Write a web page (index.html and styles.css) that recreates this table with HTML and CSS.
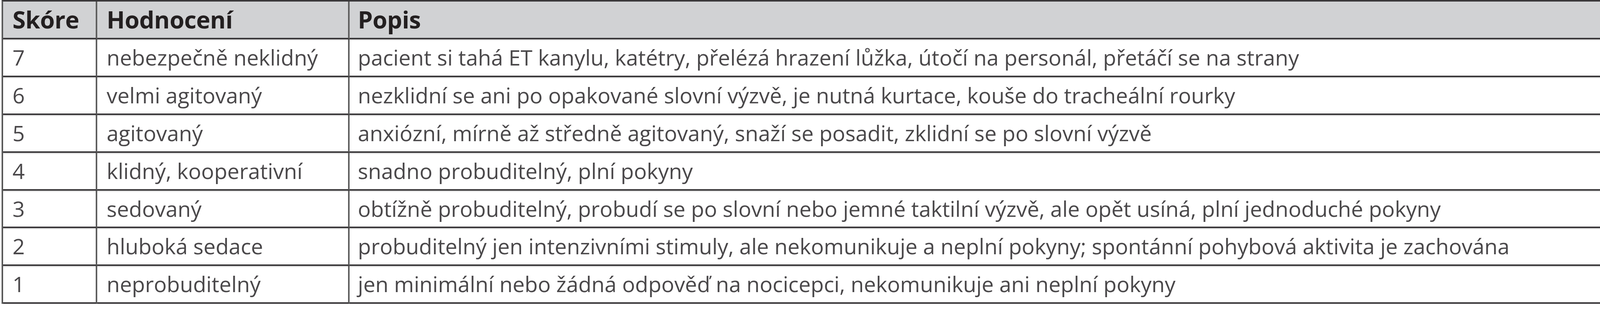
FILE: index.html
```html
<!DOCTYPE html>
<html lang="cs">
<head>
<meta charset="utf-8">
<title>Skóre</title>
<link rel="stylesheet" href="styles.css">
</head>
<body>
<table class="scale">
  <thead>
    <tr>
      <th class="c-score">Skóre</th>
      <th class="c-eval">Hodnocení</th>
      <th class="c-desc">Popis</th>
    </tr>
  </thead>
  <tbody>
    <tr><td>7</td><td>nebezpečně neklidný</td><td>pacient si tahá ET kanylu, katétry, přelézá hrazení lůžka, útočí na personál, přetáčí se na strany</td></tr>
    <tr><td>6</td><td>velmi agitovaný</td><td>nezklidní se ani po opakované slovní výzvě, je nutná kurtace, kouše do tracheální rourky</td></tr>
    <tr><td>5</td><td>agitovaný</td><td>anxiózní, mírně až středně agitovaný, snaží se posadit, zklidní se po slovní výzvě</td></tr>
    <tr><td>4</td><td>klidný, kooperativní</td><td>snadno probuditelný, plní pokyny</td></tr>
    <tr><td>3</td><td>sedovaný</td><td>obtížně probuditelný, probudí se po slovní nebo jemné taktilní výzvě, ale opět usíná, plní jednoduché pokyny</td></tr>
    <tr><td>2</td><td>hluboká sedace</td><td>probuditelný jen intenzivními stimuly, ale nekomunikuje a neplní pokyny; spontánní pohybová aktivita je zachována</td></tr>
    <tr><td>1</td><td>neprobuditelný</td><td>jen minimální nebo žádná odpověď na nocicepci, nekomunikuje ani neplní pokyny</td></tr>
  </tbody>
</table>
</body>
</html>
```
FILE: styles.css
```css
html, body {
  margin: 0;
  padding: 0;
  background: #ffffff;
}

.scale {
  margin-left: 4px;
  width: 4122px;
  border-collapse: separate;
  border-spacing: 0;
  table-layout: fixed;
  border-top: 4px solid #3a383a;
  border-left: 4px solid #5a5a5a;
  font-family: "Open Sans", "Noto Sans", sans-serif;
  font-size: 55px;
}

.scale th,
.scale td {
  box-sizing: border-box;
  height: 96.9px;
  padding: 0 0 0 21px;
  line-height: 92.9px;
  text-align: left;
  vertical-align: top;
  white-space: nowrap;
  border-right: 4px solid #5e5e5e;
  border-bottom: 4px solid #3a383a;
  box-shadow: inset 0 3px 0 #e6e6e6;
}

.scale th {
  background: #d1d2d4;
  color: #231f20;
  font-weight: 700;
  font-size: 61px;
  letter-spacing: -0.5px;
  box-shadow: none;
}

.scale td {
  color: #4a484a;
  font-weight: 400;
}

.scale td:first-child,
.scale th:first-child {
  padding-left: 24px;
}

.scale td:nth-child(2),
.scale th:nth-child(2) {
  padding-left: 24px;
}

.c-score { width: 241px; }
.c-eval { width: 646px; }
.c-desc { width: auto; }
```
